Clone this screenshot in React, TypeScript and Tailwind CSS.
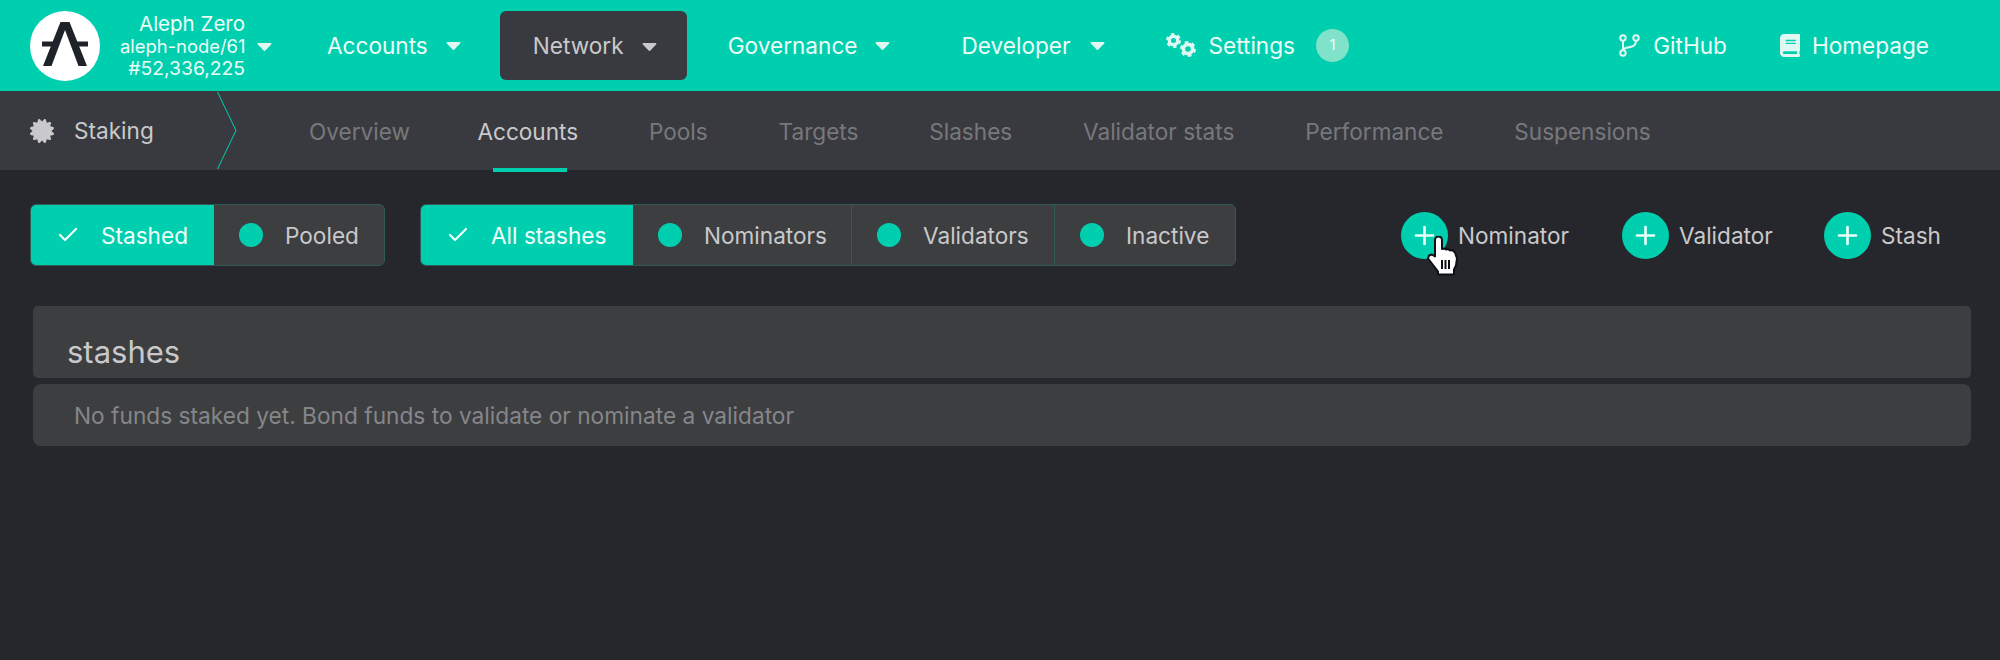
import { Check, Plus } from "lucide-react";
import { FaBook, FaCaretDown, FaCertificate } from "react-icons/fa";

const tabs = ["Overview", "Accounts", "Pools", "Targets", "Slashes", "Validator stats", "Performance", "Suspensions"];

function Caret({ className = "" }: { className?: string }) {
  return <FaCaretDown className={`h-[24px] w-[15px] shrink-0 ${className}`} />;
}

function NavItem({ label, className = "" }: { label: string; className?: string }) {
  return (
    <div className={`flex items-center gap-[18px] text-[#ecfdf8] ${className}`}>
      <span>{label}</span>
      <Caret className="text-[#dff8f1]" />
    </div>
  );
}

function Logo() {
  return (
    <div className="h-[70px] w-[70px] shrink-0 rounded-full bg-white">
      <svg viewBox="0 0 70 70" className="h-full w-full" fill="#1f2229">
        <path d="M30.500 11h9L57 55h-8.500L35 19 21.500 55H13z" />
        <path d="M12 30.500h15.500l-2 5H12zM42.500 30.500H58v5H44.500z" />
      </svg>
    </div>
  );
}

function Gears() {
  return (
    <svg viewBox="0 0 30 24" className="h-[24px] w-[30px] shrink-0" fill="none" stroke="#dff8f1">
      <circle cx="7.500" cy="7.500" r="4.200" strokeWidth="3.400" />
      <circle cx="7.500" cy="7.500" r="6.400" strokeWidth="2.200" strokeDasharray="3.400 3.300" />
      <circle cx="22" cy="16" r="4.600" strokeWidth="3.600" />
      <circle cx="22" cy="16" r="6.900" strokeWidth="2.200" strokeDasharray="3.700 3.530" />
    </svg>
  );
}

function Branch() {
  return (
    <svg viewBox="0 0 21 23" className="h-[23px] w-[21px] shrink-0" fill="none" stroke="#dff8f1" strokeWidth="2">
      <circle cx="4" cy="4" r="2.700" />
      <circle cx="17" cy="4" r="2.700" />
      <circle cx="4" cy="19" r="2.700" />
      <path d="M4 6.700v9.600M17 6.700c0 5-3 6-7 6.500-3 .4-6 1-6 3.500" />
    </svg>
  );
}

function Segment({ label, active, last, className = "" }: { label: string; active?: boolean; last?: boolean; className?: string }) {
  if (active) {
    return (
      <div className={`flex items-center gap-[23px] bg-[#00cfaf] pl-[26px] text-[#f1fffb] ${className}`}>
        <Check size={24} strokeWidth={2.200} className="-mx-[1.500px]" />
        <span className="pt-[2px]">{label}</span>
      </div>
    );
  }
  return (
    <div className={`flex items-center gap-[22px] pl-[25px] text-[#c9c9cb] ${last ? "" : "border-r border-[#2f5a55]"} ${className}`}>
      <span className="h-[24px] w-[24px] rounded-full bg-[#00cfaf]" />
      <span className="pt-[2px]">{label}</span>
    </div>
  );
}

function AddButton({ label, className = "" }: { label: string; className?: string }) {
  return (
    <div className={`flex items-center gap-[10px] text-[#c9c9cb] ${className}`}>
      <span className="flex h-[47px] w-[47px] items-center justify-center rounded-full bg-[#00cfaf] text-[#e6fff8]">
        <Plus size={29} strokeWidth={2.200} />
      </span>
      <span className="pt-[2px]">{label}</span>
    </div>
  );
}

function HandCursor() {
  return (
    <svg viewBox="0 0 32 41" className="absolute left-[1427px] top-[236px] h-[41px] w-[32px]">
      <path
        d="M8 4a3.500 3.500 0 0 1 7 0v9l3-.500 1 1 2-.500 2 1.500 2-.500 3 2.500 2 6-1 7-2 4v5H11v-3l-3-4-7-9 1-3 3-1 3 2z"
        fill="#fff"
        stroke="#0c0f14"
        strokeWidth="2"
        strokeLinejoin="round"
      />
      <path d="M15 24v9M18.500 24v9M22 24v9" stroke="#0c0f14" strokeWidth="2" />
    </svg>
  );
}

export default function App() {
  return (
    <div className="relative h-screen w-full overflow-hidden bg-[#26272c] font-[Inter,sans-serif] text-[22.600px]">
      <header className="flex h-[91px] items-center bg-[#00cfaf] pl-[30px] pr-[71px]">
        <Logo />
        <div className="ml-[20px] flex w-[151px] items-center text-[#ecfdf8]">
          <div className="w-[125px] shrink-0 whitespace-nowrap text-right leading-[22px]">
            <div className="text-[20.500px]">Aleph Zero</div>
            <div className="text-[18.400px]">aleph-node/61</div>
            <div className="text-[19.300px]">#52,336,225</div>
          </div>
          <Caret className="ml-[12px] text-[#dff8f1]" />
        </div>
        <NavItem label="Accounts" className="ml-[56px]" />
        <div className="ml-[39px] flex h-[69px] w-[187px] items-center gap-[18px] rounded-[6px] bg-[#393a40] pl-[33px] text-[#c9c9cb]">
          <span>Network</span>
          <Caret className="text-[#c9c9cb]" />
        </div>
        <NavItem label="Governance" className="ml-[41px]" />
        <NavItem label="Developer" className="ml-[71px] gap-[20px]" />
        <div className="ml-[61px] flex items-center text-[#ecfdf8]">
          <Gears />
          <span className="ml-[12px]">Settings</span>
          <span className="ml-[21px] flex h-[33px] w-[33px] items-center justify-center rounded-full bg-[#7fe2c9] text-[15px] text-[#f1fffb]">1</span>
        </div>
        <div className="ml-auto flex items-center gap-[13px] text-[#ecfdf8]">
          <Branch />
          <span>GitHub</span>
        </div>
        <div className="ml-[53px] flex items-center gap-[12px] text-[#ecfdf8]">
          <FaBook className="h-[23px] w-[20px] text-[#dff8f1]" />
          <span>Homepage</span>
        </div>
      </header>

      <nav className="flex h-[79px] items-center bg-[#393a40] pl-[30px]">
        <FaCertificate size={24} className="text-[#c9c9cb]" />
        <span className="ml-[20px] w-[143px] pt-[1px] text-[#c9c9cb]">Staking</span>
        <svg viewBox="0 0 20 77" className="h-[77px] w-[20px] shrink-0" fill="none" stroke="#00cfaf" strokeWidth="1">
          <path d="M.5 0 19 38.500.5 77" />
        </svg>
        <div className="ml-[32px] flex h-full">
          {tabs.map((t) => (
            <div
              key={t}
              className={`relative flex items-center pt-[2px] ${t === "Overview" ? "pl-[40px] pr-[32px]" : "px-[35.400px]"} ${t === "Accounts" ? "text-[#c9c9cb]" : "text-[#77787b]"}`}
            >
              {t}
              {t === "Accounts" && <span className="absolute bottom-[-2px] left-[51px] h-[4px] w-[74px] bg-[#00cfaf]" />}
            </div>
          ))}
        </div>
      </nav>

      <main className="pl-[30px] pr-[29px] pt-[34px]">
        <div className="flex h-[62px] items-stretch">
          <div className="flex overflow-hidden rounded-[6px] border border-[#2f5a55] bg-[#3d3e40]">
            <Segment label="Stashed" active className="w-[183px]" />
            <Segment label="Pooled" last className="w-[170px]" />
          </div>
          <div className="ml-[35px] flex overflow-hidden rounded-[6px] border border-[#2f5a55] bg-[#3d3e40]">
            <Segment label="All stashes" active className="w-[212px]" />
            <Segment label="Nominators" className="w-[219px]" />
            <Segment label="Validators" className="w-[203px]" />
            <Segment label="Inactive" last className="w-[180px]" />
          </div>
          <div className="ml-auto mr-[30px] flex">
            <AddButton label="Nominator" className="w-[221px]" />
            <AddButton label="Validator" className="w-[202px]" />
            <AddButton label="Stash" className="w-[117px]" />
          </div>
        </div>

        <section className="ml-[3px] mt-[40px] flex flex-col gap-[6px]">
          <div className="h-[72px] rounded-[5px] bg-[#3d3e40] pl-[34px] pt-[26px] text-[31px] leading-[40px] text-[#c9c9cb]">stashes</div>
          <div className="flex h-[62px] items-center rounded-[8px] bg-[#3d3e40] pl-[41px] pt-[2px] text-[22.700px] text-[#85868a]">
            No funds staked yet. Bond funds to validate or nominate a validator
          </div>
        </section>
      </main>

      <HandCursor />
    </div>
  );
}
